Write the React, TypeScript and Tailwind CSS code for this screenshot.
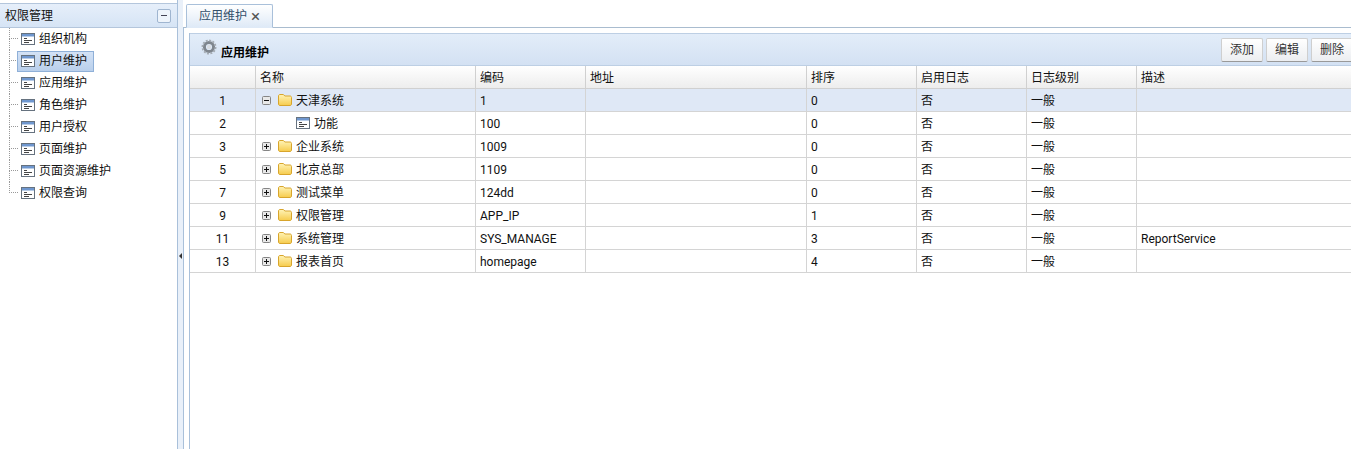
import React from "react";

const font = "font-['Roboto','Noto_Sans_CJK_SC',sans-serif]";

const menu = ["组织机构", "用户维护", "应用维护", "角色维护", "用户授权", "页面维护", "页面资源维护", "权限查询"];

const columns = [
  { label: "", width: "w-[66px]" },
  { label: "名称", width: "w-[220px]" },
  { label: "编码", width: "w-[110px]" },
  { label: "地址", width: "w-[221px]" },
  { label: "排序", width: "w-[110px]" },
  { label: "启用日志", width: "w-[110px]" },
  { label: "日志级别", width: "w-[110px]" },
  { label: "描述", width: "w-[214px]" },
];

type Row = {
  num: number;
  name: string;
  code: string;
  sort: number;
  desc?: string;
  kind: "open" | "closed" | "leaf";
};

const rows: Row[] = [
  { num: 1, name: "天津系统", code: "1", sort: 0, kind: "open" },
  { num: 2, name: "功能", code: "100", sort: 0, kind: "leaf" },
  { num: 3, name: "企业系统", code: "1009", sort: 0, kind: "closed" },
  { num: 5, name: "北京总部", code: "1109", sort: 0, kind: "closed" },
  { num: 7, name: "测试菜单", code: "124dd", sort: 0, kind: "closed" },
  { num: 9, name: "权限管理", code: "APP_IP", sort: 1, kind: "closed" },
  { num: 11, name: "系统管理", code: "SYS_MANAGE", sort: 3, desc: "ReportService", kind: "closed" },
  { num: 13, name: "报表首页", code: "homepage", sort: 4, kind: "closed" },
];

const PageIcon = () => (
  <svg width="16" height="16" viewBox="0 0 16 16" className="shrink-0">
    <rect x="1.5" y="2.5" width="13" height="11" fill="#fff" stroke="#66727f" />
    <rect x="2" y="3" width="12" height="2.5" fill="#6f97cf" />
    <path d="M4 7.5h3M4 9.5h8M4 11.5h5" stroke="#444" strokeWidth="1" />
  </svg>
);

const FolderIcon = () => (
  <svg width="16" height="16" viewBox="0 0 16 16" className="shrink-0">
    <defs>
      <linearGradient id="folder" x1="0" y1="0" x2="0" y2="1">
        <stop offset="0" stopColor="#fff4b8" />
        <stop offset="1" stopColor="#f6cb4c" />
      </linearGradient>
    </defs>
    <path
      d="M1.5 4C1.5 3 2.2 2.5 3 2.5h3.4L7.8 4h5.2c.9 0 1.5.6 1.5 1.5V12c0 .9-.6 1.5-1.5 1.5H3c-.9 0-1.5-.6-1.5-1.5z"
      fill="url(#folder)"
      stroke="#d8a52c"
    />
  </svg>
);

const Toggle = ({ open }: { open: boolean }) => (
  <svg width="9" height="9" viewBox="0 0 9 9" className="shrink-0">
    <rect x="0.5" y="0.5" width="8" height="8" rx="1" fill="#e8e8e8" stroke="#858585" />
    <path d={open ? "M2 4.5h5" : "M2 4.5h5M4.5 2v5"} stroke="#111" strokeWidth="1" />
  </svg>
);

const Gear = () => (
  <svg width="16" height="16" viewBox="0 0 16 16" className="shrink-0">
    <circle cx="8" cy="8" r="4.6" fill="none" stroke="#7f868e" strokeWidth="3" />
    <circle cx="8" cy="8" r="6.6" fill="none" stroke="#a4abb2" strokeWidth="1.8" strokeDasharray="2 1.45" />
    <circle cx="8" cy="8" r="2.2" fill="#d9dde2" />
  </svg>
);

const ToolButton = ({ label }: { label: string }) => (
  <button className="h-[24px] w-[42px] shrink-0 rounded-[2px] border border-[#cfcfcf] border-b-[#999] bg-gradient-to-b from-white to-[#eceef1] text-xs text-[#333]">
    {label}
  </button>
);

export default function App() {
  return (
    <div className={`${font} flex h-[449px] w-[1351px] overflow-hidden bg-white text-xs text-black`}>
      {/* left tree */}
      <aside className="w-[178px] shrink-0 border-r border-[#a9c0da]">
        <div className="mt-[3px] flex h-[25px] items-center justify-between border-y border-y-[#b4c6dc] bg-gradient-to-b from-[#e6effa] to-[#d6e4f5] pl-[5px] pr-[6px] text-[#111]">
          <span>权限管理</span>
          <span className="flex h-[14px] w-[14px] items-center justify-center rounded-[2px] border border-[#9fb5d0] bg-[#eef4fb]">
            <span className="h-px w-[6px] bg-[#445]" />
          </span>
        </div>
        <ul className="pl-[9px]">
          {menu.map((item, i) => (
            <li key={item} className="flex h-[22px] items-center">
              <span className="flex h-full w-[9px] shrink-0 flex-col">
                <span className="h-[11px] border-b border-l border-dotted border-[#999]" />
                {i < menu.length - 1 && <span className="h-[11px] border-l border-dotted border-[#999]" />}
              </span>
              <span
                className={`flex h-[21px] items-center gap-[2px] pl-[2px] pr-[6px] ${
                  item === "用户维护"
                    ? "-ml-px border border-[#8fb0d8] bg-gradient-to-b from-[#d3e2f6] to-[#b9cfeb]"
                    : ""
                }`}
              >
                <PageIcon />
                <span className="pl-[1px] text-[#111]">{item}</span>
              </span>
            </li>
          ))}
        </ul>
      </aside>

      {/* splitter */}
      <div className="flex w-[5px] shrink-0 items-center justify-center bg-[#e9f0f9] pt-[62px]">
        <span className="h-0 w-0 border-y-[3px] border-r-[3px] border-y-transparent border-r-[#333]" />
      </div>

      {/* main */}
      <main className="flex min-w-0 flex-1 flex-col">
        <div className="flex h-[28px] shrink-0 items-end border-b border-[#a9bccf] pl-[3px] pt-[4px]">
          <div className="-mb-px flex h-[24px] w-[87px] items-center gap-[4px] rounded-t-[2px] border border-[#a9c0da] border-b-[#dfeaf7] bg-gradient-to-b from-white to-[#dfeaf7] pl-[12px] text-[#33506b]">
            <span>应用维护</span>
            <span className="text-[17px] leading-none text-[#555]">×</span>
          </div>
        </div>
        <div className="flex min-h-0 flex-1 flex-col border-l border-[#a9c0da] pl-[5px] pt-[5px]">
          <div className="flex flex-1 flex-col overflow-hidden border-l border-[#a9c0da]">
            <div className="flex h-[33px] shrink-0 items-center justify-between border-y border-[#bdcfe4] bg-gradient-to-b from-[#e3edf9] to-[#d3e1f3] pl-[11px]">
              <div className="flex items-center gap-[4px]">
                <span className="-mt-[6px]">
                  <Gear />
                </span>
                <span className="mt-[6px] font-bold text-black">应用维护</span>
              </div>
              <div className="-mr-[2px] flex gap-[3px]">
                <ToolButton label="添加" />
                <ToolButton label="编辑" />
                <ToolButton label="删除" />
              </div>
            </div>
            <div className="flex h-[23px] shrink-0 border-b border-[#d0d0d0] bg-gradient-to-b from-white to-[#ededed]">
              {columns.map((col, i) => (
                <div
                  key={i}
                  className={`${col.width} flex shrink-0 items-center border-r border-[#d0d0d0] pl-[4px] pt-[2px] text-[#111] last:border-r-0`}
                >
                  {col.label}
                </div>
              ))}
            </div>
            {rows.map((row) => (
              <div
                key={row.num}
                className={`flex h-[23px] shrink-0 border-b border-[#d4d4d4] text-[#111] ${
                  row.num === 1 ? "bg-[#dfe8f6]" : ""
                }`}
              >
                <div className="flex w-[66px] shrink-0 items-center justify-center border-r border-[#d4d4d4] pt-[2px]">
                  {row.num}
                </div>
                <div
                  className={`flex w-[220px] shrink-0 items-center border-r border-[#d4d4d4] pt-[2px] ${
                    row.kind === "leaf" ? "pl-[39px]" : "pl-[6px]"
                  }`}
                >
                  {row.kind !== "leaf" && (
                    <span className="mb-[2px]">
                      <Toggle open={row.kind === "open"} />
                    </span>
                  )}
                  {row.kind !== "leaf" && (
                    <span className="mb-[2px] ml-[6px]">
                      <FolderIcon />
                    </span>
                  )}
                  {row.kind === "leaf" && (
                    <span className="mb-[2px]">
                      <PageIcon />
                    </span>
                  )}
                  <span className="ml-[3px]">{row.name}</span>
                </div>
                <div className="flex w-[110px] shrink-0 items-center border-r border-[#d4d4d4] pl-[4px] pt-[2px]">
                  {row.code}
                </div>
                <div className="w-[221px] shrink-0 border-r border-[#d4d4d4]" />
                <div className="flex w-[110px] shrink-0 items-center border-r border-[#d4d4d4] pl-[4px] pt-[2px]">
                  {row.sort}
                </div>
                <div className="flex w-[110px] shrink-0 items-center border-r border-[#d4d4d4] pl-[4px] pt-[2px]">否</div>
                <div className="flex w-[110px] shrink-0 items-center border-r border-[#d4d4d4] pl-[4px] pt-[2px]">一般</div>
                <div className="flex w-[214px] shrink-0 items-center pl-[4px] pt-[2px]">{row.desc}</div>
              </div>
            ))}
          </div>
        </div>
      </main>
    </div>
  );
}
